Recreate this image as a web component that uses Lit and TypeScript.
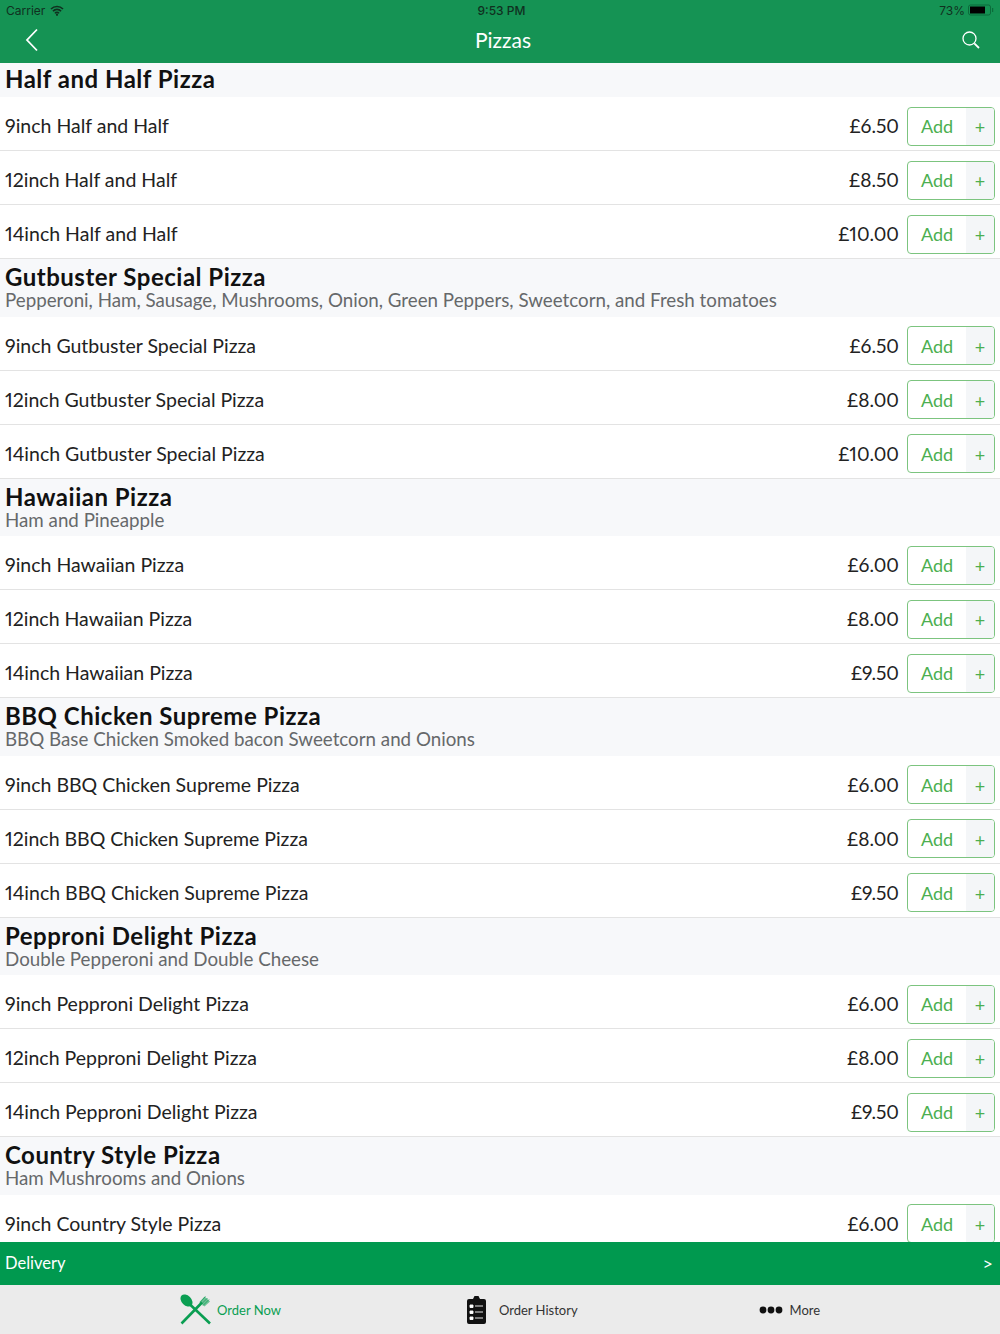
import { LitElement, html, css } from "lit";
import { customElement } from "lit/decorators.js";

type Sec = { t: string; d?: string; items: [string, string][] };
const sections: Sec[] = [
  { t: "Half and Half Pizza", items: [["9inch Half and Half", "£6.50"], ["12inch Half and Half", "£8.50"], ["14inch Half and Half", "£10.00"]] },
  { t: "Gutbuster Special Pizza", d: "Pepperoni, Ham, Sausage, Mushrooms, Onion, Green Peppers, Sweetcorn, and Fresh tomatoes", items: [["9inch Gutbuster Special Pizza", "£6.50"], ["12inch Gutbuster Special Pizza", "£8.00"], ["14inch Gutbuster Special Pizza", "£10.00"]] },
  { t: "Hawaiian Pizza", d: "Ham and Pineapple", items: [["9inch Hawaiian Pizza", "£6.00"], ["12inch Hawaiian Pizza", "£8.00"], ["14inch Hawaiian Pizza", "£9.50"]] },
  { t: "BBQ Chicken Supreme Pizza", d: "BBQ Base Chicken Smoked bacon Sweetcorn and Onions", items: [["9inch BBQ Chicken Supreme Pizza", "£6.00"], ["12inch BBQ Chicken Supreme Pizza", "£8.00"], ["14inch BBQ Chicken Supreme Pizza", "£9.50"]] },
  { t: "Pepproni Delight Pizza", d: "Double Pepperoni and Double Cheese", items: [["9inch Pepproni Delight Pizza", "£6.00"], ["12inch Pepproni Delight Pizza", "£8.00"], ["14inch Pepproni Delight Pizza", "£9.50"]] },
  { t: "Country Style Pizza", d: "Ham Mushrooms and Onions", items: [["9inch Country Style Pizza", "£6.00"]] },
];

@customElement("app-root")
export class AppRoot extends LitElement {
  static styles = css`
    :host { display: flex; flex-direction: column; width: 1000px; height: 1334px; overflow: hidden; background: #fff; font-family: Lato, "Liberation Sans", sans-serif; color: #1a1a1a; font-feature-settings: "pnum" 1; font-variant-numeric: proportional-nums; }
    .top { background: #159354; height: 63px; flex: none; display: flex; flex-direction: column; }
    .status { height: 20px; display: grid; grid-template-columns: 1fr auto 1fr; align-items: center; padding: 0 6px 0 6px; font: 12px Inter, "Liberation Sans", sans-serif; color: #10301f; }
    .status .l { display: flex; align-items: center; gap: 5px; }
    .status .r { display: flex; align-items: center; justify-content: flex-end; gap: 3px; }
    .status .c { font-weight: 500; font-size: 12px; padding-left: 3px; }
    .nav { flex: 1; display: flex; align-items: center; justify-content: space-between; padding: 0 19px 3px 25px; position: relative; color: #fff; font-size: 21px; }
    .nav .title { position: absolute; left: 6px; right: 0; top: 0; bottom: 5px; display: flex; align-items: center; justify-content: center; }
    .list { flex: 1; overflow: hidden; min-height: 0; }
    .head { background: #f7f8fa; padding: 2px 5px 0; box-sizing: border-box; }
    .head.nod { height: 34px; }
    .head.withd { height: 57.6px; padding-top: 4px; }
    .head h2 { margin: 0; font-size: 24px; letter-spacing: .5px; line-height: 28px; font-weight: 700; color: #111; }
    .head p { margin: 0; font-size: 18.75px; line-height: 18px; color: #66686a; }
    .row { height: 54px; box-sizing: border-box; border-bottom: 1px solid #e3e3e3; display: flex; align-items: center; padding: 2px 5px 0; font-size: 19.5px; color: #222; }
    .row .name { flex: 1; padding-top: 2px; }
    .row .price { margin-right: 8px; padding-top: 2px; font-size: 19.2px; }
    .btn { width: 88px; height: 39px; box-sizing: border-box; border: 1px solid #7cc47f; border-radius: 4px; display: flex; overflow: hidden; color: #4caf50; margin-top: 3px; flex: none; }
    .btn .a { width: 58px; display: flex; align-items: center; justify-content: center; font-size: 18px; }
    .btn .p { flex: 1; background: #f4f6f8; display: flex; align-items: center; justify-content: center; font-size: 18px; padding-top: 2px; box-sizing: border-box; }
    .delivery { flex: none; height: 43px; background: #00994f; color: #fff; display: flex; justify-content: space-between; align-items: center; padding: 0 7px 1px 5px; box-sizing: border-box; font-size: 16.5px; }
    .delivery .arr { font-size: 18px; }
    .tabs { flex: none; height: 49px; background: #ebebeb; display: flex; align-items: center; padding-left: 180px; font-size: 13px; color: #333; }
    .tab { display: flex; align-items: center; flex: none; }
    .t1 { color: #0a9e52; gap: 6px; }
    .t2 { margin-left: 186px; gap: 13px; }
    .t3 { margin-left: 181px; gap: 7px; }
  `;

  render() {
    return html`
      <div class="top">
        <div class="status">
          <div class="l">Carrier
            <svg width="14" height="11" viewBox="0 0 14 11"><path d="M1 4a8.500 8.500 0 0 1 12 0M3 6.300a5.200 5.200 0 0 1 8 0M5 8.400a2.400 2.400 0 0 1 4 0" fill="none" stroke="#10301f" stroke-width="1.700"/><circle cx="7" cy="9.800" r="1.100" fill="#10301f"/></svg>
          </div>
          <div class="c">9:53 PM</div>
          <div class="r">73%
            <svg width="26" height="12" viewBox="0 0 26 12"><rect x=".5" y="1" width="22" height="10" rx="2" fill="none" stroke="#0b6b3a"/><rect x="2" y="2.500" width="15" height="7" fill="#000"/><rect x="24" y="4" width="1.200" height="4" fill="#0b6b3a"/></svg>
          </div>
        </div>
        <div class="nav">
          <svg width="14" height="24" viewBox="0 0 14 24"><path d="M12 1.500L2 12l10 10.500" fill="none" stroke="#fff" stroke-width="1.800"/></svg>
          <div class="title">Pizzas</div>
          <svg width="20" height="20" viewBox="0 0 20 20"><circle cx="8.500" cy="8.500" r="6.500" fill="none" stroke="#fff" stroke-width="1.300"/><path d="M13.300 13.300L18 18" stroke="#fff" stroke-width="1.800"/></svg>
        </div>
      </div>
      <div class="list">
        ${sections.map((s) => html`
          <div class="head ${s.d ? "withd" : "nod"}">
            <h2>${s.t}</h2>
            ${s.d ? html`<p>${s.d}</p>` : ""}
          </div>
          ${s.items.map(([n, p]) => html`
            <div class="row">
              <div class="name">${n}</div>
              <div class="price">${p}</div>
              <div class="btn"><div class="a">Add</div><div class="p">+</div></div>
            </div>`)}
        `)}
      </div>
      <div class="delivery"><span>Delivery</span><span class="arr">&gt;</span></div>
      <div class="tabs">
        <div class="tab t1">
          <svg width="31" height="31" viewBox="0 0 31 31">
            <ellipse cx="6.500" cy="6.500" rx="4.800" ry="7" transform="rotate(-45 6.500 6.500)" fill="#0a9e52"/>
            <path d="M9.500 10L30 29.500M22 8.500L1.500 29.500" stroke="#0a9e52" stroke-width="2.600" fill="none"/>
            <path d="M19.500 8l5-5.500 5.500 5-5.500 5z" fill="#0a9e52" opacity=".55"/>
            <path d="M20 8.500l5.500-6M21.500 10l6-6M23 11.500l6-6" stroke="#0a9e52" stroke-width="1" opacity=".7"/>
          </svg>
          <span>Order Now</span>
        </div>
        <div class="tab t2">
          <svg width="19" height="28" viewBox="0 0 19 28">
            <path d="M2 3h4l1.500-3h4L13 3h4a2 2 0 0 1 2 2v21a2 2 0 0 1-2 2H2a2 2 0 0 1-2-2V5a2 2 0 0 1 2-2z" fill="#111"/>
            <path d="M3 9h3v2.500H3zM3 15h3v2.500H3zM3 21h3v2.500H3zM8 10h8M8 16h8M8 22h8" fill="#fff" stroke="#fff" stroke-width=".9"/>
          </svg>
          <span>Order History</span>
        </div>
        <div class="tab t3">
          <svg width="24" height="8" viewBox="0 0 24 8"><circle cx="4" cy="4" r="3.400" fill="#111"/><circle cx="12" cy="4" r="3.400" fill="#111"/><circle cx="20" cy="4" r="3.400" fill="#111"/></svg>
          <span>More</span>
        </div>
      </div>
    `;
  }
}
